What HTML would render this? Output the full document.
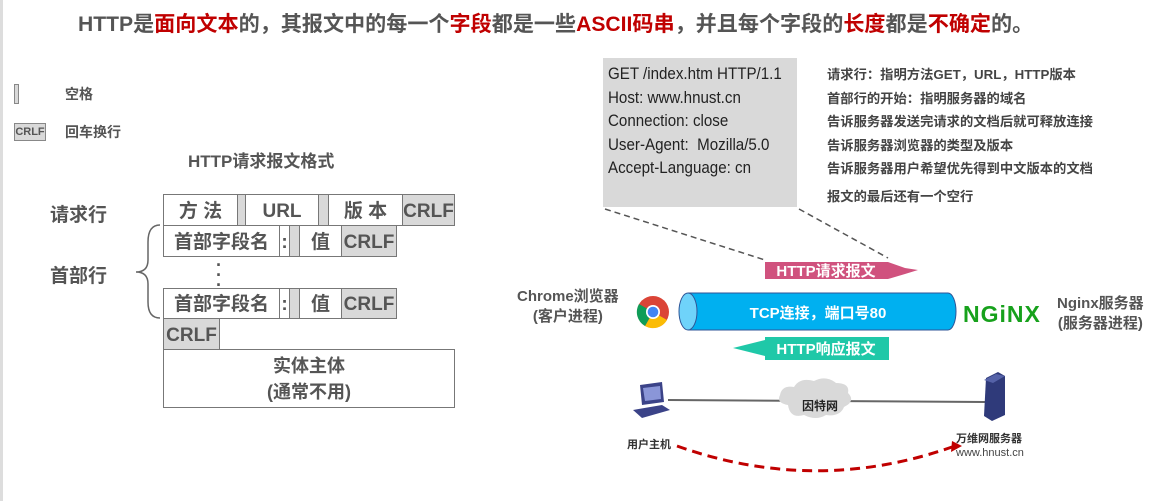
<!DOCTYPE html>
<html><head><meta charset="utf-8"><style>
*{margin:0;padding:0;box-sizing:border-box}
body{width:1169px;height:501px;background:#fff;position:relative;overflow:hidden;font-family:"Liberation Sans","Noto Sans CJK SC",sans-serif;color:#555}
.a{position:absolute;white-space:nowrap}
.b{font-weight:bold}
.r{color:#c00000}
.c{position:absolute;border:1px solid #777;display:flex;align-items:center;justify-content:center;font-weight:bold;font-size:19px;color:#555;background:#fff;line-height:1;padding-top:2px}
.g{background:#d9d9d9}
</style></head><body>
<div style="position:absolute;left:0;top:0;width:3px;height:501px;background:#ddd"></div>
<div class="a b" style="left:78px;top:8px;font-size:21.1px;color:#555">HTTP是<span class="r">面向文本</span>的，其报文中的每一个<span class="r">字段</span>都是一些<span class="r">ASCII码串</span>，并且每个字段的<span class="r">长度</span>都是<span class="r">不确定</span>的。</div>

<div style="position:absolute;left:14px;top:84px;width:5px;height:20px;background:#d9d9d9;border:1px solid #888"></div>
<div class="a b" style="left:65px;top:84px;font-size:14px">空格</div>
<div style="position:absolute;left:14px;top:123px;width:32px;height:18px;background:#d9d9d9;border:1px solid #888;font-size:11px;font-weight:bold;text-align:center;line-height:16px">CRLF</div>
<div class="a b" style="left:65px;top:122px;font-size:14px">回车换行</div>
<div class="a b" style="left:188px;top:147px;font-size:17px">HTTP请求报文格式</div>

<div class="a b" style="left:50px;top:200px;font-size:19px">请求行</div>
<div class="a b" style="left:50px;top:261px;font-size:19px">首部行</div>
<svg style="position:absolute;left:130px;top:222px" width="35" height="100"><path d="M30 3 Q18 3 18 20 L18 38 Q18 50 6 50 Q18 50 18 62 L18 80 Q18 96 30 96" fill="none" stroke="#666" stroke-width="1.5"/></svg>

<div class="c" style="left:163px;top:194px;width:75px;height:32px">方&nbsp;法</div>
<div class="c g" style="left:237px;top:194px;width:9px;height:32px"></div>
<div class="c" style="left:245px;top:194px;width:74px;height:32px">URL</div>
<div class="c g" style="left:318px;top:194px;width:11px;height:32px"></div>
<div class="c" style="left:328px;top:194px;width:75px;height:32px">版&nbsp;本</div>
<div class="c g" style="left:402px;top:194px;width:53px;height:32px">CRLF</div>

<div class="c" style="left:163px;top:225px;width:117px;height:32px">首部字段名</div>
<div class="c" style="left:279px;top:225px;width:11px;height:32px">:</div>
<div class="c g" style="left:289px;top:225px;width:11px;height:32px"></div>
<div class="c" style="left:299px;top:225px;width:43px;height:32px">值</div>
<div class="c g" style="left:341px;top:225px;width:56px;height:32px">CRLF</div>

<div class="a b" style="left:216px;top:260px;font-size:18px;line-height:10px">·<br>·<br>·</div>

<div class="c" style="left:163px;top:288px;width:117px;height:31px">首部字段名</div>
<div class="c" style="left:279px;top:288px;width:11px;height:31px">:</div>
<div class="c g" style="left:289px;top:288px;width:11px;height:31px"></div>
<div class="c" style="left:299px;top:288px;width:43px;height:31px">值</div>
<div class="c g" style="left:341px;top:288px;width:56px;height:31px">CRLF</div>
<div class="c g" style="left:163px;top:318px;width:57px;height:32px">CRLF</div>
<div class="c" style="left:163px;top:349px;width:292px;height:59px;flex-direction:column;font-size:18px;line-height:26px;padding-top:0"><div>实体主体</div><div>(通常不用)</div></div>

<div style="position:absolute;left:603px;top:58px;width:194px;height:149px;background:#d9d9d9"></div>
<div class="a" style="left:608px;top:62px;font-size:17px;line-height:23.5px;color:#222;transform:scaleX(0.89);transform-origin:left">GET /index.htm HTTP/1.1<br>Host: www.hnust.cn<br>Connection: close<br>User-Agent:&nbsp; Mozilla/5.0<br>Accept-Language: cn</div>
<div class="a b" style="left:827px;top:63px;font-size:13.3px;line-height:23.5px;color:#444">请求行：指明方法GET，URL，HTTP版本<br>首部行的开始：指明服务器的域名<br>告诉服务器发送完请求的文档后就可释放连接<br>告诉服务器浏览器的类型及版本<br>告诉服务器用户希望优先得到中文版本的文档</div>
<div class="a b" style="left:827px;top:186px;font-size:13.3px;color:#444">报文的最后还有一个空行</div>

<svg style="position:absolute;left:0;top:0" width="1169" height="501">
<line x1="605" y1="209" x2="765" y2="260" stroke="#555" stroke-width="1.5" stroke-dasharray="6,4"/>
<line x1="799" y1="209" x2="888" y2="258" stroke="#555" stroke-width="1.5" stroke-dasharray="6,4"/>
<rect x="765" y="262" width="123" height="17" fill="#d0527e"/>
<polygon points="888,262 905,268 918,270 905,274 888,279" fill="#d0527e"/>
<text x="826" y="276" text-anchor="middle" font-size="15" font-weight="bold" fill="#fff" font-family="Liberation Sans,Noto Sans CJK SC,sans-serif">HTTP请求报文</text>
<path d="M688 293 L948 293 A8 18.5 0 0 1 948 330 L688 330" fill="#00b0f0" stroke="#2f5597" stroke-width="1"/>
<ellipse cx="688" cy="311.5" rx="9" ry="18.5" fill="#6fd3fa" stroke="#2f5597" stroke-width="1"/>
<text x="818" y="318" text-anchor="middle" font-size="15" font-weight="bold" fill="#fff" font-family="Liberation Sans,Noto Sans CJK SC,sans-serif">TCP连接，端口号80</text>
<rect x="765" y="337" width="124" height="23" fill="#1fc8a8"/>
<polygon points="765,340 733,348 765,356" fill="#1fc8a8"/>
<text x="826" y="354" text-anchor="middle" font-size="15" font-weight="bold" fill="#fff" font-family="Liberation Sans,Noto Sans CJK SC,sans-serif">HTTP响应报文</text>
<circle cx="653" cy="312" r="16" fill="#db4437"/>
<path d="M653 312 L667 320 A16 16 0 0 1 645 326 Z" fill="#fbbc05"/>
<path d="M653 312 L645 326 A16 16 0 0 1 639 304 Z" fill="#0f9d58"/>
<circle cx="653" cy="312" r="7" fill="#fff"/><circle cx="653" cy="312" r="5.3" fill="#4285f4"/>
<text x="963" y="322" font-size="23" font-weight="bold" fill="#17a11c" font-family="Liberation Sans,sans-serif" letter-spacing="1">NGiNX</text>
<line x1="668" y1="400" x2="985" y2="402" stroke="#666" stroke-width="2"/>
<path d="M788 405 q-12 -2 -8 -10 q2 -10 14 -8 q6 -10 20 -6 q12 -6 22 2 q14 0 12 10 q8 8 -4 14 q-4 10 -18 8 q-10 6 -22 0 q-14 4 -16 -10z" fill="#d9d9d9"/>
<text x="820" y="410" text-anchor="middle" font-size="12" font-weight="bold" fill="#222" font-family="Liberation Sans,Noto Sans CJK SC,sans-serif">因特网</text>
<polygon points="640,385 662,382 664,402 642,405" fill="#3b4388"/><polygon points="643,388 660,386 661,399 645,401" fill="#8a96d8"/>
<polygon points="633,410 662,405 670,410 642,418" fill="#3b4388"/>
<polygon points="986,378 998,372 1005,376 1005,415 992,421 984,416" fill="#2f3a7a"/>
<polygon points="984,380 996,374 1005,376 993,383" fill="#5562a8"/>
<path d="M677 446 Q815 495 952 447" fill="none" stroke="#c00000" stroke-width="3" stroke-dasharray="10,6"/>
<polygon points="952,441 962,446 951,452" fill="#c00000"/>
</svg>
<div class="a b" style="left:517px;top:287px;font-size:15px;line-height:20px;text-align:center">Chrome浏览器<br>(客户进程)</div>
<div class="a b" style="left:1057px;top:294px;font-size:15px;line-height:20px;text-align:center">Nginx服务器<br>(服务器进程)</div>
<div class="a b" style="left:627px;top:436px;font-size:11px;color:#333">用户主机</div>
<div class="a b" style="left:956px;top:430px;font-size:11px;color:#333">万维网服务器</div>
<div class="a" style="left:956px;top:447px;font-size:11px;color:#444">www.hnust.cn</div>
</body></html>
